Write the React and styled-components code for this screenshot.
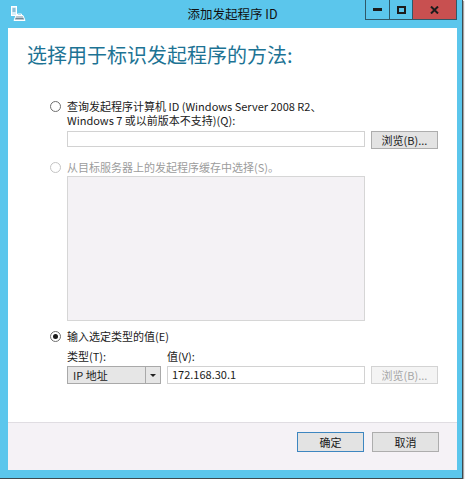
import React from "react";
import styled, { createGlobalStyle } from "styled-components";

const GlobalStyle = createGlobalStyle`
  html, body {
    margin: 0;
    padding: 0;
    background: #ffffff;
  }
  body {
    font-family: "Noto Sans CJK SC", "Liberation Sans", sans-serif;
    font-size: 11px;
    color: #1a1a1a;
  }
`;

const Window = styled.div`
  width: 463px;
  height: 479px;
  box-sizing: border-box;
  background: #5bc6ec;
  border-right: 1px solid #3d4a50;
  border-bottom: 1px solid #3d4a50;
  box-shadow: 1px 1px 1px rgba(0, 0, 0, 0.35);
  padding: 0 5px 8px 8px;
  display: flex;
  flex-direction: column;
`;

const TitleBar = styled.div`
  height: 28px;
  flex: none;
  display: grid;
  grid-template-columns: 1fr auto 1fr;
  align-items: start;
`;

const AppIcon = styled.div`
  padding: 6px 0 0 2px;
  line-height: 0;
`;

const Title = styled.div`
  font-size: 12.5px;
  line-height: 28px;
  color: #111;
`;

const Caption = styled.div`
  justify-self: end;
  display: flex;
  height: 19px;
  border: 1px solid #2f5868;
  border-top: none;
`;

const CapBtn = styled.div`
  width: ${(p) => p.$w}px;
  height: 19px;
  background: ${(p) => (p.$close ? "#c85050" : "#5bc6ec")};
  border-left: ${(p) => (p.$first ? "none" : "1px solid #2f5868")};
  display: flex;
  align-items: center;
  justify-content: center;
`;

const Client = styled.div`
  flex: 1;
  background: #ffffff;
  display: flex;
  flex-direction: column;
`;

const Body = styled.div`
  flex: 1;
  padding: 13px 0 0 19px;
  display: flex;
  flex-direction: column;
`;

const Heading = styled.h1`
  margin: 0;
  font-size: 20px;
  line-height: 28px;
  font-weight: 400;
  color: #1d7394;
`;

const Option = styled.div`
  margin-left: 23px;
  margin-top: ${(p) => p.$top}px;
  display: grid;
  grid-template-columns: 17px 1fr;
`;

const Radio = styled.span`
  width: 9px;
  height: 9px;
  margin-top: 2px;
  border-radius: 50%;
  border: 1px solid ${(p) => (p.$disabled ? "#c4c4c4" : "#6e6e6e")};
  background: #fff;
  display: flex;
  align-items: center;
  justify-content: center;
  &::after {
    content: "";
    width: 5px;
    height: 5px;
    border-radius: 50%;
    background: ${(p) => (p.$checked ? "#1a1a1a" : "transparent")};
  }
`;

const Label = styled.div`
  line-height: 14px;
  color: ${(p) => (p.$disabled ? "#9c9c9c" : "#1a1a1a")};
`;

const Panel = styled.div`
  grid-column: 2;
`;

const Row = styled.div`
  display: flex;
  align-items: flex-start;
  gap: ${(p) => p.$gap || 6}px;
  margin-top: ${(p) => p.$top || 0}px;
`;

const TextBox = styled.div`
  width: ${(p) => p.$w}px;
  height: ${(p) => p.$h || 16}px;
  box-sizing: border-box;
  border: 1px solid #d2d2d2;
  background: #fff;
  padding: 0 4px;
  line-height: 15px;
  color: #1a1a1a;
`;

const Button = styled.div`
  width: ${(p) => p.$w || 67}px;
  height: ${(p) => p.$h || 18}px;
  box-sizing: border-box;
  border: 1px solid ${(p) => (p.$default ? "#3d86c0" : p.$disabled ? "#d3d3d3" : "#adadad")};
  background: ${(p) => (p.$disabled ? "#f4f4f4" : "#e3e3e3")};
  color: ${(p) => (p.$disabled ? "#a6a6a6" : "#1a1a1a")};
  display: flex;
  align-items: center;
  justify-content: center;
`;

const ListBox = styled.div`
  width: 298px;
  height: 145px;
  margin-top: 2px;
  box-sizing: border-box;
  border: 1px solid #d6d6d6;
  background: #f4f2f5;
`;

const FieldCol = styled.div`
  display: flex;
  flex-direction: column;
  gap: 3px;
`;

const Combo = styled.div`
  width: 94px;
  height: 18px;
  box-sizing: border-box;
  border: 1px solid #a9a9a9;
  background: #e6e6e6;
  display: grid;
  grid-template-columns: 1fr 15px;
`;

const ComboText = styled.span`
  padding-left: 5px;
  line-height: 16px;
`;

const ComboArrow = styled.span`
  border-left: 1px solid #a9a9a9;
  display: flex;
  align-items: center;
  justify-content: center;
  &::after {
    content: "";
    border-left: 3px solid transparent;
    border-right: 3px solid transparent;
    border-top: 3px solid #222;
  }
`;

const Footer = styled.div`
  flex: none;
  height: 38px;
  border-top: 1px solid #e0dde2;
  background: #f5f2f6;
  display: flex;
  justify-content: flex-end;
  align-items: flex-start;
  gap: 8px;
  padding: 9px 18px 0 0;
`;

const ServerIcon = () => (
  <svg width="16" height="16" viewBox="0 0 16 16">
    <rect x="1.5" y="0.5" width="5" height="9" fill="#d8eef8" stroke="#ffffff" />
    <line x1="2.5" y1="3" x2="5.5" y2="3" stroke="#3f8fb5" />
    <line x1="2.5" y1="5" x2="5.5" y2="5" stroke="#3f8fb5" />
    <path d="M4 14.5 L6 9.5 H13 L15 14.5 Z" fill="#b9c6cf" stroke="#ffffff" />
    <path d="M7.5 9.5 V8 H11.5 V9.5" fill="none" stroke="#ffffff" />
    <line x1="5.5" y1="12.5" x2="13.5" y2="12.5" stroke="#6e8796" />
  </svg>
);

export default function App() {
  return (
    <>
      <GlobalStyle />
      <Window>
        <TitleBar>
          <AppIcon>
            <ServerIcon />
          </AppIcon>
          <Title>添加发起程序 ID</Title>
          <Caption>
            <CapBtn $w={23} $first>
              <svg width="9" height="3"><rect width="9" height="3" fill="#1c1c1c" /></svg>
            </CapBtn>
            <CapBtn $w={22}>
              <svg width="9" height="8"><rect x="1" y="1" width="7" height="6" fill="none" stroke="#1c1c1c" strokeWidth="2" /></svg>
            </CapBtn>
            <CapBtn $w={43} $close>
              <svg width="9" height="8" viewBox="0 0 9 8">
                <path d="M1 0.5 L8 7.5 M8 0.5 L1 7.5" stroke="#1c1c1c" strokeWidth="2" />
              </svg>
            </CapBtn>
          </Caption>
        </TitleBar>

        <Client>
          <Body>
            <Heading>选择用于标识发起程序的方法:</Heading>

            <Option $top={30}>
              <Radio />
              <Label>
                查询发起程序计算机 ID (Windows Server 2008 R2、
                <br />
                Windows 7 或以前版本不支持)(Q):
              </Label>
              <Panel>
                <Row $top={4} $gap={6}>
                  <TextBox $w={298} />
                  <Button>浏览(B)...</Button>
                </Row>
              </Panel>
            </Option>

            <Option $top={11}>
              <Radio $disabled />
              <Label $disabled>从目标服务器上的发起程序缓存中选择(S)。</Label>
              <Panel>
                <ListBox />
              </Panel>
            </Option>

            <Option $top={8}>
              <Radio $checked />
              <Label>输入选定类型的值(E)</Label>
              <Panel>
                <Row $top={6} $gap={6}>
                  <FieldCol>
                    <Label>类型(T):</Label>
                    <Combo>
                      <ComboText>IP 地址</ComboText>
                      <ComboArrow />
                    </Combo>
                  </FieldCol>
                  <FieldCol>
                    <Label>值(V):</Label>
                    <TextBox $w={198} $h={18}>172.168.30.1</TextBox>
                  </FieldCol>
                  <FieldCol>
                    <Label>&nbsp;</Label>
                    <Button $disabled>浏览(B)...</Button>
                  </FieldCol>
                </Row>
              </Panel>
            </Option>
          </Body>

          <Footer>
            <Button $h={20} $default>确定</Button>
            <Button $h={20}>取消</Button>
          </Footer>
        </Client>
      </Window>
    </>
  );
}
